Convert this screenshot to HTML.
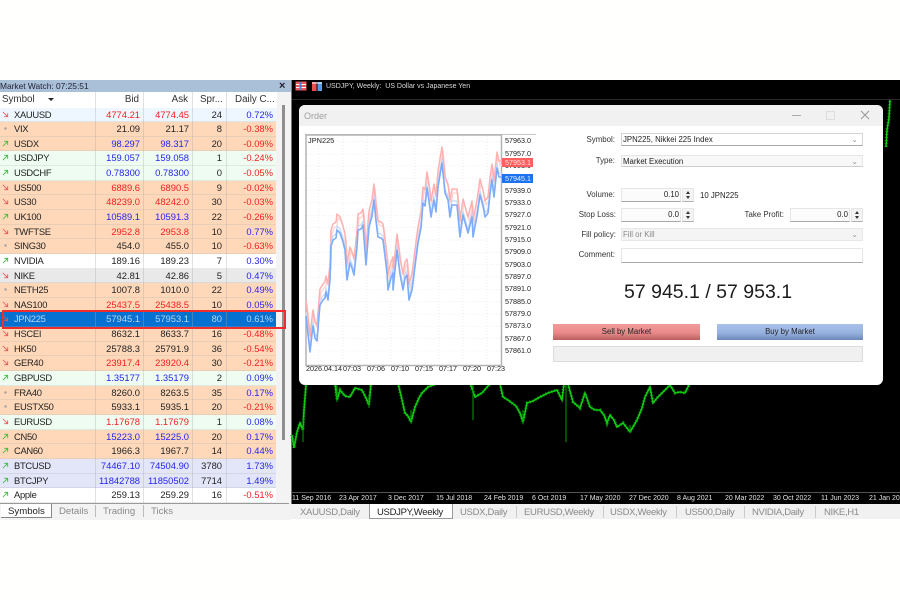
<!DOCTYPE html>
<html><head><meta charset="utf-8"><style>
html,body{margin:0;padding:0;background:#fffffd}
#w{position:relative;width:900px;height:600px;overflow:hidden;font-family:"Liberation Sans",sans-serif;font-size:9.4px;color:#222;filter:blur(.35px);background:#fffffd}
#w div,#w span{position:absolute;white-space:nowrap}
#mw{left:0;top:80px;width:291px;height:440px;background:#f3f3f3}
#tt{left:0;top:0;width:291px;height:12px;background:#a9c0d8;font-size:8.4px;line-height:12px;color:#223}
#hd{left:0;top:12px;width:277px;height:16px;background:#fff;font-size:9.8px;line-height:15px;color:#333}
#rows{left:0;top:107.5px;width:276px;position:absolute}
#rows p{position:relative;margin:0;height:14.654px;line-height:14.4px;box-sizing:border-box;border-bottom:1px solid rgba(170,170,170,.25)}
#rows svg{position:absolute;left:2px;top:3px;width:7px;height:7px}
#rows b{position:absolute;left:14px;top:0;font-weight:normal;color:#222;letter-spacing:-.3px}
#rows i{position:absolute;top:0;font-style:normal;text-align:right;color:#222}
#rows i:nth-of-type(1){right:136px}#rows i:nth-of-type(2){right:87px}#rows i:nth-of-type(3){right:54px}#rows i:nth-of-type(4){right:3px}
#rows i.R{color:#f32020}#rows i.U{color:#2424ee}
.P{background:#ffd8b9}.B{background:#eef7ff}.G{background:#eefcf1}.W{background:#fff}.Y{background:#e9e9e9}.L{background:#e3e5f8}
#rows p.S{background:#0671d0}#rows p.S b,#rows p.S i{color:#b9d6f3}
.v{top:92px;width:1px;height:411px;background:rgba(170,170,170,.35)}
.lt{font-size:9.6px;top:505px;color:#8a8a8a;line-height:13px}
.tb{font-size:9.5px;letter-spacing:-.3px;color:#8a8a8a;top:506px;line-height:13px}
.ax{top:494px;font-size:7px;color:#e0e0e0;line-height:10px}
#dl{left:299px;top:105px;width:584px;height:280px;background:#fff;border-radius:6px}
#tb{left:0;top:0;width:584px;height:21px;background:#f1f1f1;border-radius:6px 6px 0 0}
.pr{left:505px;font-size:7.2px;line-height:10px;color:#222}
.tm{top:364px;font-size:7.2px;line-height:10px;color:#222}
.lb{width:100px;text-align:right;font-size:7.9px;line-height:12px;color:#333}
.f{background:#fbfbfb;border:1px solid #e6e6e6;border-bottom-color:#a8a8a8;box-sizing:border-box;font-size:7.8px;line-height:11px;color:#222}
.n{text-align:right;padding-right:1px;line-height:12px}
.sp{width:12px;background:#f4f4f4;border:1px solid #e6e6e6;border-bottom-color:#b0b0b0;box-sizing:border-box}
.sp:before{content:"";position:absolute;left:3px;top:2px;border:2.5px solid transparent;border-top:0;border-bottom:3px solid #333}
.sp:after{content:"";position:absolute;left:3px;bottom:2px;border:2.5px solid transparent;border-bottom:0;border-top:3px solid #333}
.ch{font-size:8px;color:#999;right:4px;top:0}
</style></head><body><div id="w">

<svg width="0" height="0" style="position:absolute"><defs>
<symbol id="a" viewBox="0 0 8 8"><path d="M1 7 L6.5 1.5 M2.5 1.5 H6.5 V5.5" fill="none" stroke="#3dbb3d" stroke-width="1"/></symbol>
<symbol id="d" viewBox="0 0 8 8"><path d="M1 1 L6.5 6.5 M2.5 6.5 H6.5 V2.5" fill="none" stroke="#e85a5a" stroke-width="1"/></symbol>
<symbol id="o" viewBox="0 0 8 8"><circle cx="4" cy="4" r="1.4" fill="#a0a0a0"/></symbol>
</defs></svg>

<div id="mw">
 <div id="tt">Market Watch: 07:25:51<span style="left:279px;top:0;font-size:11px;font-weight:bold;color:#223">×</span></div>
 <div id="hd">
  <span style="left:2px">Symbol</span><span style="left:48px;top:6px;border:3px solid transparent;border-top:3px solid #222;border-bottom:0"></span>
  <span style="right:138px">Bid</span><span style="right:89px">Ask</span><span style="left:200px">Spr...</span><span style="left:235px">Daily C...</span>
 </div>
 <div style="left:282px;top:25px;width:3px;height:335px;background:#8f8f8f"></div>
</div>

<div id="rows">
<p class="B"><svg><use href="#d"/></svg><b>XAUUSD</b><i class="R">4774.21</i><i class="R">4774.45</i><i>24</i><i class="U">0.72%</i></p>
<p class="P"><svg><use href="#o"/></svg><b>VIX</b><i>21.09</i><i>21.17</i><i>8</i><i class="R">-0.38%</i></p>
<p class="P"><svg><use href="#a"/></svg><b>USDX</b><i class="U">98.297</i><i class="U">98.317</i><i>20</i><i class="R">-0.09%</i></p>
<p class="G"><svg><use href="#a"/></svg><b>USDJPY</b><i class="U">159.057</i><i class="U">159.058</i><i>1</i><i class="R">-0.24%</i></p>
<p class="G"><svg><use href="#a"/></svg><b>USDCHF</b><i class="U">0.78300</i><i class="U">0.78300</i><i>0</i><i class="R">-0.05%</i></p>
<p class="P"><svg><use href="#d"/></svg><b>US500</b><i class="R">6889.6</i><i class="R">6890.5</i><i>9</i><i class="R">-0.02%</i></p>
<p class="P"><svg><use href="#d"/></svg><b>US30</b><i class="R">48239.0</i><i class="R">48242.0</i><i>30</i><i class="R">-0.03%</i></p>
<p class="P"><svg><use href="#a"/></svg><b>UK100</b><i class="U">10589.1</i><i class="U">10591.3</i><i>22</i><i class="R">-0.26%</i></p>
<p class="P"><svg><use href="#d"/></svg><b>TWFTSE</b><i class="R">2952.8</i><i class="R">2953.8</i><i>10</i><i class="U">0.77%</i></p>
<p class="P"><svg><use href="#o"/></svg><b>SING30</b><i>454.0</i><i>455.0</i><i>10</i><i class="R">-0.63%</i></p>
<p class="W"><svg><use href="#a"/></svg><b>NVIDIA</b><i>189.16</i><i>189.23</i><i>7</i><i class="U">0.30%</i></p>
<p class="Y"><svg><use href="#d"/></svg><b>NIKE</b><i>42.81</i><i>42.86</i><i>5</i><i class="U">0.47%</i></p>
<p class="P"><svg><use href="#o"/></svg><b>NETH25</b><i>1007.8</i><i>1010.0</i><i>22</i><i class="U">0.49%</i></p>
<p class="P"><svg><use href="#d"/></svg><b>NAS100</b><i class="R">25437.5</i><i class="R">25438.5</i><i>10</i><i class="U">0.05%</i></p>
<p class="S"><svg><use href="#d"/></svg><b>JPN225</b><i>57945.1</i><i>57953.1</i><i>80</i><i>0.61%</i></p>
<p class="P"><svg><use href="#d"/></svg><b>HSCEI</b><i>8632.1</i><i>8633.7</i><i>16</i><i class="R">-0.48%</i></p>
<p class="P"><svg><use href="#d"/></svg><b>HK50</b><i>25788.3</i><i>25791.9</i><i>36</i><i class="R">-0.54%</i></p>
<p class="P"><svg><use href="#d"/></svg><b>GER40</b><i class="R">23917.4</i><i class="R">23920.4</i><i>30</i><i class="R">-0.21%</i></p>
<p class="G"><svg><use href="#a"/></svg><b>GBPUSD</b><i class="U">1.35177</i><i class="U">1.35179</i><i>2</i><i class="U">0.09%</i></p>
<p class="P"><svg><use href="#o"/></svg><b>FRA40</b><i>8260.0</i><i>8263.5</i><i>35</i><i class="U">0.17%</i></p>
<p class="P"><svg><use href="#o"/></svg><b>EUSTX50</b><i>5933.1</i><i>5935.1</i><i>20</i><i class="R">-0.21%</i></p>
<p class="G"><svg><use href="#d"/></svg><b>EURUSD</b><i class="R">1.17678</i><i class="R">1.17679</i><i>1</i><i class="U">0.08%</i></p>
<p class="P"><svg><use href="#a"/></svg><b>CN50</b><i class="U">15223.0</i><i class="U">15225.0</i><i>20</i><i class="U">0.17%</i></p>
<p class="P"><svg><use href="#a"/></svg><b>CAN60</b><i>1966.3</i><i>1967.7</i><i>14</i><i class="U">0.44%</i></p>
<p class="L"><svg><use href="#a"/></svg><b>BTCUSD</b><i class="U">74467.10</i><i class="U">74504.90</i><i>3780</i><i class="U">1.73%</i></p>
<p class="L"><svg><use href="#a"/></svg><b>BTCJPY</b><i class="U">11842788</i><i class="U">11850502</i><i>7714</i><i class="U">1.49%</i></p>
<p class="W"><svg><use href="#a"/></svg><b>Apple</b><i>259.13</i><i>259.29</i><i>16</i><i class="R">-0.51%</i></p>
</div>
<div class="v" style="left:95px"></div><div class="v" style="left:143px"></div><div class="v" style="left:192px"></div><div class="v" style="left:226px"></div>
<div style="left:2px;top:310px;width:284px;height:18.5px;box-sizing:border-box;border:2px solid #f02c2c"></div>

<div style="left:0;top:503px;width:289px;height:1px;background:#999"></div>
<div style="left:1px;top:504px;width:51px;height:14px;background:#fff;border-right:1px solid #888;border-bottom:1px solid #888;box-sizing:border-box"></div>
<div class="lt" style="left:8px;color:#222">Symbols</div>
<div class="lt" style="left:59px">Details</div><div class="lt" style="left:103px">Trading</div><div class="lt" style="left:151px">Ticks</div>
<div style="left:95px;top:505px;width:1px;height:12px;background:#bbb"></div><div style="left:143px;top:505px;width:1px;height:12px;background:#bbb"></div>

<!-- chart -->
<div style="left:291px;top:80px;width:1px;height:425px;background:#777"></div>
<div style="left:292px;top:80px;width:608px;height:424px;background:#000"></div>
<div style="left:292px;top:98.5px;width:608px;height:1px;background:#2a2a2a"></div>
<div style="left:292px;top:492px;width:608px;height:1px;background:#555"></div>
<svg style="position:absolute;left:0;top:0" width="900" height="600">
<defs><g id="gr">
<polyline points="292,435 294,448 297,432 300,423 303,430 304,410 306,385"/>
<polyline points="335,383 337,400 340,390 345,396 350,397 355,388 362,390 366,398 369,405 371,383"/>
<polyline points="398,383 402,400 405,413 408,416 411,422 415,407 419,398 422,393 428,387 436,384"/>
<polyline points="470,383 475,397 482,393 488,386 490,384"/>
<polyline points="500,384 503,397 508,400 512,403 516,406 520,413 523,422 527,403 533,401 540,397 548,393 557,390 562,400 564,384"/>
<polyline points="568,384 573,402 580,408 585,393 590,407 595,410 600,410 604,415 607,423 610,415 614,420 617,427 623,423 627,428 630,432 637,420 642,408 645,397 650,387 653,403 657,398 662,393 670,385 675,393 680,392 685,393 690,383"/>
<polyline points="886,147 887,130 889,118 890,100"/>
</g></defs>
<use href="#gr" fill="none" stroke="#007a00" stroke-width="3.500" stroke-dasharray="1 2"/>
<use href="#gr" fill="none" stroke="#12cc12" stroke-width="1.600"/>
<path d="M303 418V442M473 385V420M566 385V442M523 410V424M411 410V423M630 425V433M337 385V402M369 395V408" stroke="#00a000" stroke-width="1"/>
<rect x="295.500" y="81.500" width="11" height="9" fill="#e85a5a"/><path d="M296 84.500H306M296 87.500H306" stroke="#fff"/><path d="M300.500 82V90" stroke="#4a7fd8" stroke-width="2"/>
<rect x="312" y="82" width="4.500" height="9" fill="#e85050"/><rect x="317.500" y="82" width="4.500" height="9" fill="#5a9ae8"/><path d="M312 83H322" stroke="#fff"/>
</svg>
<div style="left:326px;top:81px;font-size:7px;line-height:11px;color:#d8d8d8">USDJPY, Weekly:&nbsp; US Dollar vs Japanese Yen</div>
<div class="ax" style="left:292px">11 Sep 2016</div><div class="ax" style="left:339px">23 Apr 2017</div><div class="ax" style="left:388px">3 Dec 2017</div><div class="ax" style="left:436px">15 Jul 2018</div><div class="ax" style="left:484px">24 Feb 2019</div><div class="ax" style="left:532px">6 Oct 2019</div><div class="ax" style="left:580px">17 May 2020</div><div class="ax" style="left:629px">27 Dec 2020</div><div class="ax" style="left:677px">8 Aug 2021</div><div class="ax" style="left:725px">20 Mar 2022</div><div class="ax" style="left:773px">30 Oct 2022</div><div class="ax" style="left:821px">11 Jun 2023</div><div class="ax" style="left:869px">21 Jan 2024</div>

<!-- chart tabs -->
<div style="left:291px;top:504px;width:609px;height:15px;background:#f1f1f1"></div>
<div style="left:369px;top:504px;width:84px;height:14.500px;background:#fff;border:1px solid #999;border-top:0;box-sizing:border-box"></div>
<div class="tb" style="left:300px">XAUUSD,Daily</div>
<div class="tb" style="left:377px;color:#222">USDJPY,Weekly</div>
<div class="tb" style="left:460px">USDX,Daily</div>
<div class="tb" style="left:524px">EURUSD,Weekly</div>
<div class="tb" style="left:610px">USDX,Weekly</div>
<div class="tb" style="left:685px">US500,Daily</div>
<div class="tb" style="left:752px">NVIDIA,Daily</div>
<div class="tb" style="left:824px">NIKE,H1</div>
<div style="left:516px;top:506px;width:1px;height:12px;background:#ccc"></div><div style="left:603px;top:506px;width:1px;height:12px;background:#ccc"></div><div style="left:676px;top:506px;width:1px;height:12px;background:#ccc"></div><div style="left:744px;top:506px;width:1px;height:12px;background:#ccc"></div><div style="left:815px;top:506px;width:1px;height:12px;background:#ccc"></div>

<!-- dialog -->
<div id="dl">
 <div id="tb"></div>
 <div style="left:5px;top:5px;font-size:9px;line-height:12px;color:#a0a0a0">Order</div>
</div>
<svg style="position:absolute;left:0;top:0" width="900" height="600">
<path d="M792 115.500H801" stroke="#aaa"/><rect x="826.500" y="111.500" width="8" height="8" fill="none" stroke="#ddd"/><path d="M861 111L869 119M869 111L861 119" stroke="#999"/>
<path d="M305 134.500H536" stroke="#c4c4c4"/>
<g stroke="#efefef" stroke-dasharray="1 2">
<path d="M307 141.500H501M307 154H501M307 166H501M307 178.500H501M307 190.500H501M307 203H501M307 215.500H501M307 227.500H501M307 240H501M307 252.500H501M307 264.500H501M307 277H501M307 289.500H501M307 301.500H501M307 314H501M307 326.500H501M307 338.500H501M307 351H501"/>
<path d="M318.500 136V364M343 136V364M367 136V364M391 136V364M415 136V364M439 136V364M463 136V364M487 136V364"/>
</g>
<rect x="306" y="135" width="195.500" height="230.500" fill="none" stroke="#b4b4b4" stroke-width="1.500"/>
<defs>
<polyline id="rd" points="306,300 308,318 310,336 312,318 313,310 315,322 317,325 319,300 320,289 323,284 325,282 326,276 328,284 330,264 331,230 333,224 336,222 337,214 340,217 343,226 345,234 347,264 350,247 352,252 354,259 357,231 358,214 361,213 363,209 366,249 369,211 372,200 374,184 376,205 378,221 381,222 383,224 385,240 387,257 388,274 391,262 393,257 393,274 397,234 400,258 403,274 405,262 407,259 409,284 412,274 415,250 418,227 421,212 423,187 425,190 427,172 429,185 431,201 434,184 436,196 438,171 442,147 445,177 448,184 450,201 452,189 457,189 460,221 463,199 466,210 468,217 472,201 473,221 477,200 480,179 483,190 485,201 488,197 490,178 492,164 494,181 497,152 499,161 502,161"/>
</defs>
<g fill="none" stroke-linejoin="round">
<use href="#rd" stroke="#ffd2d2" stroke-width="1.200" transform="translate(1,4)"/>
<use href="#rd" stroke="#ffb0b0" stroke-width="1.500"/>
<use href="#rd" stroke="#c4d8fc" stroke-width="1.200" transform="translate(0,12)"/>
<use href="#rd" stroke="#7dacf8" stroke-width="1.600" transform="translate(0,16)"/>
</g>
</svg>
<div style="left:308px;top:135px;font-size:7.400px;line-height:11px;color:#222">JPN225</div>
<div class="pr" style="top:136px">57963.0</div><div class="pr" style="top:149px">57957.0</div><div class="pr" style="top:161px">57951.0</div><div class="pr" style="top:185.500px">57939.0</div><div class="pr" style="top:198px">57933.0</div><div class="pr" style="top:210px">57927.0</div><div class="pr" style="top:222.500px">57921.0</div><div class="pr" style="top:235px">57915.0</div><div class="pr" style="top:247px">57909.0</div><div class="pr" style="top:259.500px">57903.0</div><div class="pr" style="top:272px">57897.0</div><div class="pr" style="top:284px">57891.0</div><div class="pr" style="top:296.500px">57885.0</div><div class="pr" style="top:309px">57879.0</div><div class="pr" style="top:321px">57873.0</div><div class="pr" style="top:333.500px">57867.0</div><div class="pr" style="top:346px">57861.0</div>
<div class="pr" style="left:502px;top:157.500px;width:31px;height:9px;line-height:9px;background:#ff5f5f;color:#ffe4e4;padding-left:3px;box-sizing:border-box">57953.1</div>
<div class="pr" style="left:502px;top:173.500px;width:31px;height:9px;line-height:9px;background:#1f72f0;color:#e4eeff;padding-left:3px;box-sizing:border-box">57945.1</div>
<div class="tm" style="left:306px">2026.04.14</div><div class="tm" style="left:343px">07:03</div><div class="tm" style="left:367px">07:06</div><div class="tm" style="left:391px">07:10</div><div class="tm" style="left:415px">07:15</div><div class="tm" style="left:439px">07:17</div><div class="tm" style="left:463px">07:20</div><div class="tm" style="left:487px">07:23</div>

<div class="lb" style="left:515px;top:134px">Symbol:</div>
<div class="f" style="left:621px;top:133px;width:242px;height:13px;padding-left:1px;background:#fff;border-color:#d4d4d4;border-bottom-color:#aaa">JPN225, Nikkei 225 Index<span class="ch">⌄</span></div>
<div class="lb" style="left:515px;top:155px">Type:</div>
<div class="f" style="left:621px;top:155px;width:242px;height:12px;padding-left:1px;background:#f8f8f8;border-bottom-color:#ccc">Market Execution<span class="ch">⌄</span></div>
<div class="lb" style="left:515px;top:189px">Volume:</div>
<div class="f n" style="left:621px;top:188px;width:60px;height:14px">0.10</div><div class="sp" style="left:682px;top:188px;height:14px"></div>
<div style="left:700px;top:190px;font-size:7.800px;line-height:12px;color:#222">10 JPN225</div>
<div class="lb" style="left:516px;top:209px">Stop Loss:</div>
<div class="f n" style="left:621px;top:208px;width:60px;height:14px">0.0</div><div class="sp" style="left:682px;top:208px;height:14px"></div>
<div class="lb" style="left:684px;top:209px">Take Profit:</div>
<div class="f n" style="left:790px;top:208px;width:60px;height:14px">0.0</div><div class="sp" style="left:851px;top:208px;height:14px"></div>
<div class="lb" style="left:516px;top:229px">Fill policy:</div>
<div class="f" style="left:621px;top:228px;width:242px;height:13px;padding-left:1px;background:#f4f4f4;color:#888;border-color:#e8e8e8">Fill or Kill<span class="ch">⌄</span></div>
<div class="lb" style="left:515px;top:249px">Comment:</div>
<div class="f" style="left:621px;top:248px;width:242px;height:15px;background:#fff;border-bottom-color:#aaa"></div>
<div style="left:624px;top:281px;font-size:19.500px;line-height:23px;color:#1c1c1c">57 945.1 / 57 953.1</div>
<div style="left:553px;top:324px;width:147px;height:16px;background:linear-gradient(#f39a9a,#e98a8a 55%,#b96060);text-align:center;font-size:7.800px;line-height:15px;color:#222">Sell by Market</div>
<div style="left:717px;top:324px;width:146px;height:16px;background:linear-gradient(#a9c1ea,#98b2e0 55%,#6c88b8);text-align:center;font-size:7.800px;line-height:15px;color:#222">Buy by Market</div>
<div style="left:553px;top:346px;width:310px;height:16px;background:#f0f0f0;border:1px solid #dcdcdc;box-sizing:border-box"></div>

</div></body></html>
